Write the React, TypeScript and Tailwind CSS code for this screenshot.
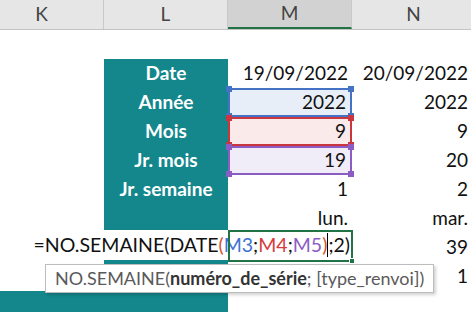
import React from "react";

type Hl = "blue" | "red" | "purple" | null;

const hlStyles: Record<string, { cell: string; sq: string }> = {
  blue: { cell: "bg-[#e8eef8] border-2 border-[#4472c4]", sq: "bg-[#4472c4]" },
  red: { cell: "bg-[#fbeaea] border-2 border-[#c9363d]", sq: "bg-[#c9363d]" },
  purple: { cell: "bg-[#f1edf8] border-2 border-[#8b5cc3]", sq: "bg-[#8b5cc3]" },
};

const rows: { k?: boolean; l: string | null; m: string; n: string; hl?: Hl }[] = [
  { l: null, m: "", n: "" },
  { l: "Date", m: "19/09/2022", n: "20/09/2022" },
  { l: "Année", m: "2022", n: "2022", hl: "blue" },
  { l: "Mois", m: "9", n: "9", hl: "red" },
  { l: "Jr. mois", m: "19", n: "20", hl: "purple" },
  { l: "Jr. semaine", m: "1", n: "2" },
  { l: "", m: "lun.", n: "mar." },
  { l: "", m: "", n: "39" },
  { l: "", m: "", n: "1" },
  { k: true, l: "", m: "", n: "" },
];

function Corner({ color, pos }: { color: string; pos: string }) {
  return <div className={`absolute w-[6px] h-[6px] ${color} ${pos}`} />;
}

export default function App() {
  return (
    <div className="relative w-[471px] h-[312px] overflow-hidden bg-white font-['Lato',sans-serif] text-[19px] text-[#111]">
      {/* column header */}
      <div className="flex -ml-[20px] h-[30px] bg-[#e6e6e6] border-b border-[#c4c4c4]">
        {["K", "L", "M", "N"].map((c) => (
          <div
            key={c}
            className={`w-[124px] shrink-0 flex items-center justify-center border-r border-[#c8c8c8] text-[#444] ${
              c === "M" ? "bg-[#d2d2d2] border-b-2 border-b-[#217346]" : ""
            }`}
          >
            {c}
          </div>
        ))}
      </div>
      {/* sheet rows */}
      <div className="flex flex-col -ml-[20px]">
        {rows.map((r, i) => (
          <div key={i} className="flex h-[29px]">
            <div className={`w-[124px] shrink-0 ${r.k ? "bg-[#13878c]" : ""}`} />
            <div
              className={`w-[124px] shrink-0 flex items-center justify-center font-bold text-white ${
                r.l !== null ? "bg-[#13878c]" : ""
              }`}
            >
              {r.l}
            </div>
            <div
              className={`relative w-[124px] shrink-0 flex items-center justify-end pr-[4px] ${
                r.hl ? hlStyles[r.hl].cell : ""
              }`}
            >
              {r.m}
              {r.hl && (
                <>
                  <Corner color={hlStyles[r.hl].sq} pos="-left-[4px] -top-[4px]" />
                  <Corner color={hlStyles[r.hl].sq} pos="-right-[4px] -top-[4px]" />
                  <Corner color={hlStyles[r.hl].sq} pos="-left-[4px] -bottom-[4px]" />
                  <Corner color={hlStyles[r.hl].sq} pos="-right-[4px] -bottom-[4px]" />
                </>
              )}
            </div>
            <div className="w-[120px] shrink-0 flex items-center justify-end pr-[4px]">{r.n}</div>
          </div>
        ))}
      </div>

      {/* in-cell editor overlay */}
      <div className="absolute left-0 top-[230px] w-[353px] h-[30px] bg-white flex items-center justify-end pr-[3px] whitespace-nowrap text-[19.5px]">
        <span>=NO.SEMAINE(DATE</span>
        <span className="text-[#d4522c]">(</span>
        <span className="text-[#3f72d2]">M3</span>
        <span>;</span>
        <span className="text-[#d63a3a]">M4</span>
        <span>;</span>
        <span className="text-[#8e5cc4]">M5</span>
        <span className="text-[#d4522c]">)</span>
        <span className="inline-block w-[1px] h-[24px] bg-black" />
        <span>;2)</span>
      </div>
      {/* active cell border */}
      <div className="absolute left-[228px] top-[230px] w-[125px] h-[32px] border-2 border-[#217346]">
        <div className="absolute -right-[4px] -bottom-[4px] w-[6px] h-[6px] bg-[#217346] border border-white" />
      </div>

      {/* tooltip */}
      <div className="absolute left-[45px] top-[264px] w-[389px] h-[29px] bg-white border border-[#bdbdbd] shadow-[2px_2px_3px_rgba(0,0,0,0.18)] flex items-center pl-[9px] text-[18px] text-[#5a5a5a] whitespace-nowrap">
        <span>NO.SEMAINE(</span>
        <span className="font-bold text-[#333]">numéro_de_série</span>
        <span>; [type_renvoi])</span>
      </div>
    </div>
  );
}
